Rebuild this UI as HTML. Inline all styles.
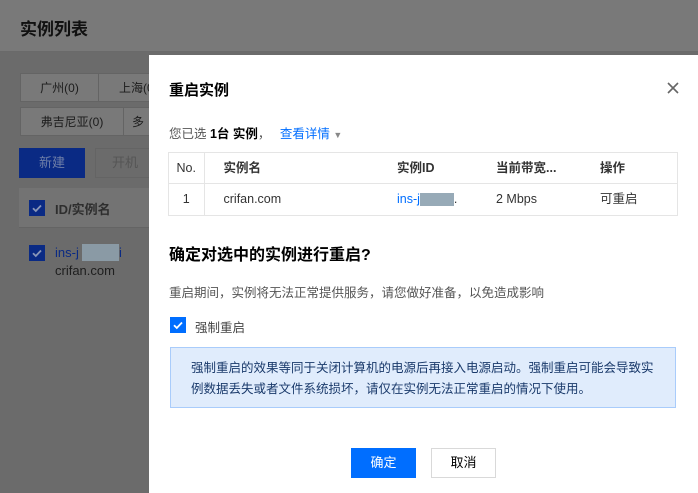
<!DOCTYPE html>
<html><head><meta charset="utf-8"><style>
*{margin:0;padding:0;box-sizing:border-box}
body{width:698px;height:493px;overflow:hidden;position:relative;background:#6b6b6b;font-family:"Liberation Sans","Noto Sans CJK SC",sans-serif;font-size:12px;color:#000}
.a{position:absolute}
.hdr{left:0;top:0;width:698px;height:52px;background:#797979;border-bottom:1px solid #6a6a6a}
.tab{background:#797979;border:1px solid #646464;color:#1c1c1c;font-size:12px;text-align:center}
.modal{left:149px;top:55px;width:549px;height:438px;background:#fff}
.m{position:absolute}
table{border-collapse:collapse;width:508px;table-layout:fixed}
td{border-top:1px solid #e5e5e5;height:31px;font-size:12.5px;color:#333;vertical-align:middle;padding:0;white-space:nowrap;line-height:16px}
td span{vertical-align:top}
.cb{width:16px;height:16px;display:block}
</style></head><body>
<div class="a hdr"></div>
<div class="a" style="left:20px;top:15px;font-size:17px;font-weight:bold;color:#111">实例列表</div>
<div class="a tab" style="left:20px;top:73px;width:79px;height:29px;line-height:28px">广州(0)</div>
<div class="a tab" style="left:98px;top:73px;width:60px;height:29px;line-height:28px;text-align:left;padding-left:20px">上海(0</div>
<div class="a tab" style="left:20px;top:107px;width:104px;height:29px;line-height:28px">弗吉尼亚(0)</div>
<div class="a tab" style="left:123px;top:107px;width:30px;height:29px;line-height:28px">多</div>
<div class="a" style="left:19px;top:148px;width:66px;height:30px;background:#0a2a84;color:#6f7fa8;line-height:30px;text-align:center;font-size:13px">新建</div>
<div class="a" style="left:95px;top:148px;width:60px;height:30px;border:1px solid #646464;color:#555;line-height:28px;text-align:center;font-size:13px">开机</div>
<div class="a" style="left:19px;top:188px;width:135px;height:40px;background:#737373;border-bottom:1px solid #646464"></div>
<svg class="a cb" style="left:29px;top:200px" viewBox="0 0 16 16"><rect width="16" height="16" fill="#0a2a84"/><path d="M4 8.2l2.8 2.8L12 5.5" stroke="#8a97b8" stroke-width="1.8" fill="none"/></svg>
<div class="a" style="left:55px;top:199px;font-size:13px;color:#2e2e2e;font-weight:bold">ID/实例名</div>
<svg class="a cb" style="left:29px;top:245px" viewBox="0 0 16 16"><rect width="16" height="16" fill="#0a2a84"/><path d="M4 8.2l2.8 2.8L12 5.5" stroke="#8a97b8" stroke-width="1.8" fill="none"/></svg>
<div class="a" style="left:55px;top:245px;font-size:13px;color:#0a2a84">ins-j</div>
<div class="a" style="left:82px;top:244px;width:37px;height:17px;background:#8a9aa5"></div>
<div class="a" style="left:119px;top:245px;font-size:13px;color:#0a2a84">i</div>
<div class="a" style="left:55px;top:263px;font-size:13px;color:#1e1e1e">crifan.com</div>

<div class="a modal">
<div class="m" style="left:20px;top:24px;font-size:15px;font-weight:bold;color:#000">重启实例</div>
<svg class="m" style="left:518px;top:27px" width="12" height="12" viewBox="0 0 12 12"><path d="M1 1L11 11M11 1L1 11" stroke="#666" stroke-width="1.6"/></svg>
<div class="m" style="left:20px;top:68px;font-size:12.5px;color:#555">您已选 <b style="color:#000">1台 实例</b>， <span style="color:#006eff;margin-left:6px">查看详情</span> <span style="color:#888;font-size:9px">▼</span></div>
<div class="m" style="left:19px;top:97px;border:1px solid #e5e5e5;border-top:none">
<table>
<tr><td style="width:35px;text-align:center;border-right:1px solid #e5e5e5">No.</td><td style="padding-left:19px;width:193px;font-weight:bold">实例名</td><td style="width:99px;font-weight:bold">实例ID</td><td style="width:104px;font-weight:bold">当前带宽...</td><td style="font-weight:bold">操作</td></tr>
<tr><td style="text-align:center;border-right:1px solid #e5e5e5">1</td><td style="padding-left:19px">crifan.com</td><td><span style="color:#006eff">ins-j</span><span style="display:inline-block;width:34px;height:13px;background:#97aab7;margin-top:2px"></span><span>.</span></td><td>2 Mbps</td><td><span style="display:inline-block;line-height:16px">可重启</span></td></tr>
</table></div>
<div class="m" style="left:20px;top:186px;font-size:16px;font-weight:bold;color:#000">确定对选中的实例进行重启?</div>
<div class="m" style="left:20px;top:227px;font-size:12.5px;color:#555">重启期间，实例将无法正常提供服务，请您做好准备，以免造成影响</div>
<svg class="m cb" style="left:21px;top:262px" viewBox="0 0 16 16"><rect width="16" height="16" fill="#006eff"/><path d="M4 8.2l2.8 2.8L12 5.5" stroke="#fff" stroke-width="1.8" fill="none"/></svg>
<div class="m" style="left:46px;top:262px;font-size:12.5px;color:#444">强制重启</div>
<div class="m" style="left:21px;top:292px;width:506px;height:61px;background:#e0ecfc;border:1px solid #a9ccfb;padding:10px 0 0 20px;font-size:12.5px;line-height:21px;color:#1a3a6b">强制重启的效果等同于关闭计算机的电源后再接入电源启动。强制重启可能会导致实<br>例数据丢失或者文件系统损坏，请仅在实例无法正常重启的情况下使用。</div>
<div class="m" style="left:202px;top:393px;width:65px;height:30px;background:#006eff;color:#fff;line-height:30px;text-align:center;font-size:13px">确定</div>
<div class="m" style="left:282px;top:393px;width:65px;height:30px;border:1px solid #d9d9d9;color:#000;line-height:28px;text-align:center;font-size:13px">取消</div>
</div>
</body></html>
